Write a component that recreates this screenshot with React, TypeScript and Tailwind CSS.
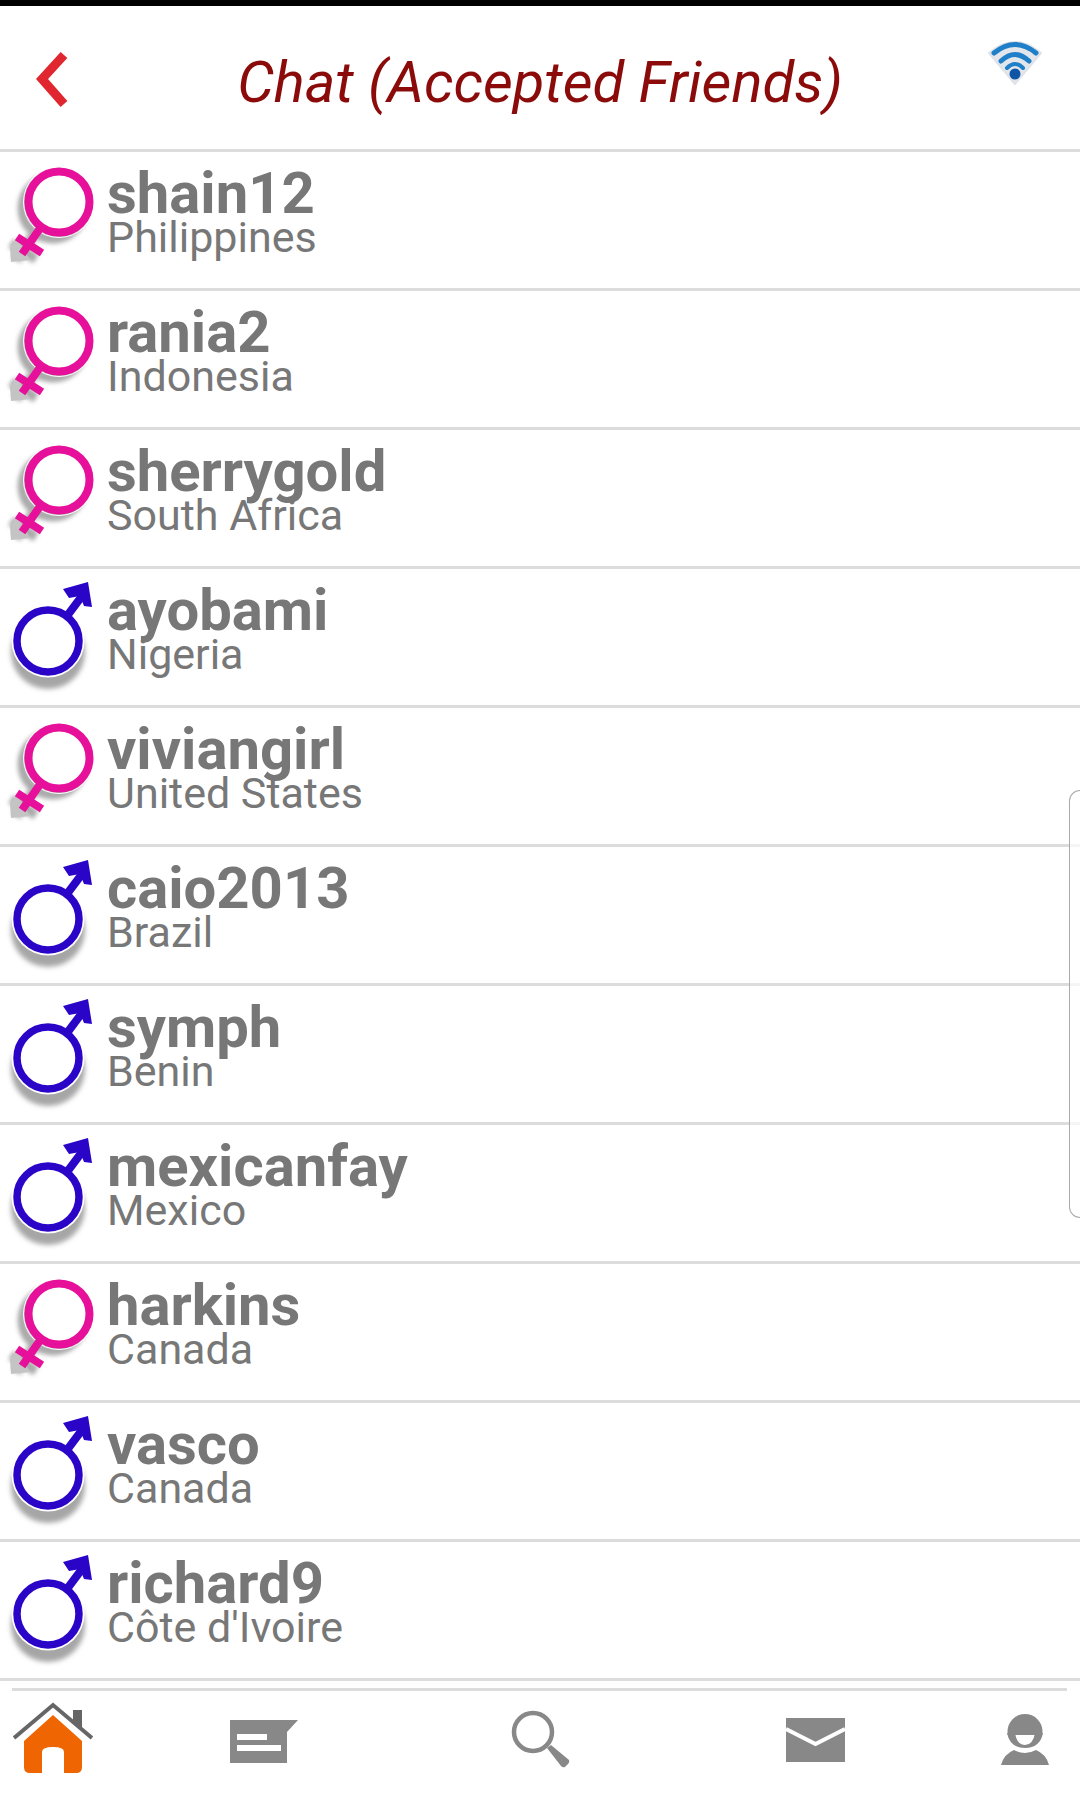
import React from "react";

const people: [string, string, "f" | "m"][] = [
  ["shain12", "Philippines", "f"],
  ["rania2", "Indonesia", "f"],
  ["sherrygold", "South Africa", "f"],
  ["ayobami", "Nigeria", "m"],
  ["viviangirl", "United States", "f"],
  ["caio2013", "Brazil", "m"],
  ["symph", "Benin", "m"],
  ["mexicanfay", "Mexico", "m"],
  ["harkins", "Canada", "f"],
  ["vasco", "Canada", "m"],
  ["richard9", "Côte d'Ivoire", "m"],
];

function FemaleShape({ color, w = 8 }: { color: string; w?: number }) {
  return (
    <g fill="none" stroke={color} strokeWidth={w}>
      <circle cx="59" cy="50" r="30.5" />
      <path d="M41 75 L22 102 M17 85 L42 101" />
    </g>
  );
}

function Female() {
  return (
    <svg width="107" height="136" viewBox="0 0 107 136" className="shrink-0">
      <defs>
        <filter id="fb" x="-30%" y="-30%" width="160%" height="160%">
          <feGaussianBlur stdDeviation="2" />
        </filter>
      </defs>
      <g filter="url(#fb)" transform="translate(-6 6)">
        <FemaleShape color="#aaaaaa" w={10} />
      </g>
      <path d="M10 96 L17 86 L30 108 L11 110 Z" fill="#c4c4c4" />
      <circle cx="59" cy="50" r="27" fill="#fff" />
      <circle cx="59" cy="50" r="35.5" fill="none" stroke="#fff" strokeWidth="1" />
      <FemaleShape color="#e6109a" />
    </svg>
  );
}

function Male() {
  return (
    <svg width="107" height="136" viewBox="0 0 107 136" className="shrink-0">
      <defs>
        <filter id="mb" x="-30%" y="-30%" width="160%" height="160%">
          <feGaussianBlur stdDeviation="2.5" />
        </filter>
      </defs>
      <circle cx="48" cy="83" r="37" fill="#a6a6a6" filter="url(#mb)" />
      <circle cx="48" cy="72" r="36.5" fill="#fff" />
      <g stroke="#2a05c8" fill="none">
        <circle cx="48" cy="72" r="31" strokeWidth="7.5" />
        <path d="M67 47 L82 27" strokeWidth="8" />
      </g>
      <path d="M63 20 L88 13 L92 38 L84 37 L80 27 L69 29 Z" fill="#2a05c8" />
    </svg>
  );
}

export default function App() {
  return (
    <div
      className="relative w-[1080px] h-[1806px] overflow-hidden bg-white text-[#777777]"
      style={{ fontFamily: "Roboto, sans-serif" }}
    >
      <div className="h-[6px] bg-black" />
      <header className="flex h-[143px] items-start">
        <div className="w-[140px] pl-[36px] pt-[44px]">
          <svg width="36" height="60" viewBox="0 0 36 60">
            <path d="M28 5 L6 29 L28 54" fill="none" stroke="#e0262e" strokeWidth="9" />
          </svg>
        </div>
        <h1 className="flex-1 pt-[43px] text-center text-[58px] leading-[66px] font-normal italic whitespace-nowrap text-[#8b0b0b]">
          Chat (Accepted Friends)
        </h1>
        <div className="w-[140px] pl-[47px] pt-[33px]">
          <svg width="56" height="46" viewBox="0 0 56 46">
            <path d="M2 14 Q28 -8 54 14 L28 45 Z" fill="#e3e6ea" stroke="#dfe3e8" strokeWidth="2" strokeLinejoin="round" />
            <g fill="none" stroke="#1f7fc8" strokeLinecap="round">
              <path d="M7 14 Q28 -3 49 14" strokeWidth="5" />
              <path d="M14 22 Q28 9 42 22" strokeWidth="5" />
              <path d="M20 29 Q28 21 36 29" strokeWidth="4" />
            </g>
            <circle cx="28" cy="35" r="5.5" fill="#0e55a6" />
          </svg>
        </div>
      </header>
      <ul className="border-t-[3px] border-[#dcdcdc]">
        {people.map(([name, place, g]) => (
          <li key={name} className="flex h-[139px] border-b-[3px] border-[#dcdcdc]">
            {g === "f" ? <Female /> : <Male />}
            <div className="pt-[16px]">
              <div className="text-[58px] leading-[50px] font-bold whitespace-nowrap">{name}</div>
              <div className="text-[43px] leading-[38px] font-normal whitespace-nowrap">{place}</div>
            </div>
          </li>
        ))}
      </ul>
      <nav className="mt-[7px] ml-[12px] mr-[13px] border-t-[3px] border-[#dcdcdc]">
        <div className="flex items-start pl-[1px]">
          <svg width="80" height="72" viewBox="0 0 80 72" className="mt-[11px] shrink-0">
            <path d="M1 36 L40 3 L79 36" fill="none" stroke="#666" strokeWidth="4" />
            <path d="M60 18 V8 H69 V27 Z" fill="#666" />
            <path d="M40 13 L69 39 V65 Q69 71 63 71 H51 V50 Q51 45 40 45 Q29 45 29 50 V71 H17 Q11 71 11 65 V39 Z" fill="#ee6502" />
          </svg>
          <svg width="68" height="44" viewBox="0 0 68 44" className="ml-[137px] mt-[29px] shrink-0">
            <path d="M0 0 H68 L57 12 V43 H0 Z" fill="#888" />
            <rect x="7" y="14" width="30" height="6" fill="#fff" />
            <rect x="7" y="25" width="44" height="6" fill="#fff" />
          </svg>
          <svg width="60" height="60" viewBox="0 0 60 60" className="ml-[213px] mt-[19px] shrink-0">
            <circle cx="22" cy="22" r="19" fill="none" stroke="#888" strokeWidth="4.5" />
            <path d="M36 38 L40 35 L58 50 Q59 52 57 54 L54 57 Q52 58 50 56 Z" fill="#888" />
          </svg>
          <svg width="59" height="45" viewBox="0 0 59 45" className="ml-[215px] mt-[27px] shrink-0">
            <rect width="59" height="44" fill="#888" />
            <path d="M0 11 L29.5 26 L59 11" fill="none" stroke="#fff" strokeWidth="4" />
          </svg>
          <svg width="50" height="52" viewBox="0 0 50 52" className="ml-[155px] mt-[23px] shrink-0">
            <circle cx="25" cy="17.5" r="17.5" fill="#888" />
            <path d="M7 21 H43 V38 H7 Z" fill="#fff" />
            <path d="M7 19 H15 Q17 31 25 31 Q33 31 35 19 H43 Q40 34 25 34 Q10 34 7 19 Z" fill="#888" />
            <path d="M1 51 Q4 40 14 36 Q25 42 36 36 Q46 40 49 51 Z" fill="#888" />
          </svg>
        </div>
      </nav>
      <div className="absolute right-0 top-[790px] h-[428px] w-[11px] rounded-l-[12px] border border-r-0 border-[#aaaaaa] bg-white/70" />
    </div>
  );
}
